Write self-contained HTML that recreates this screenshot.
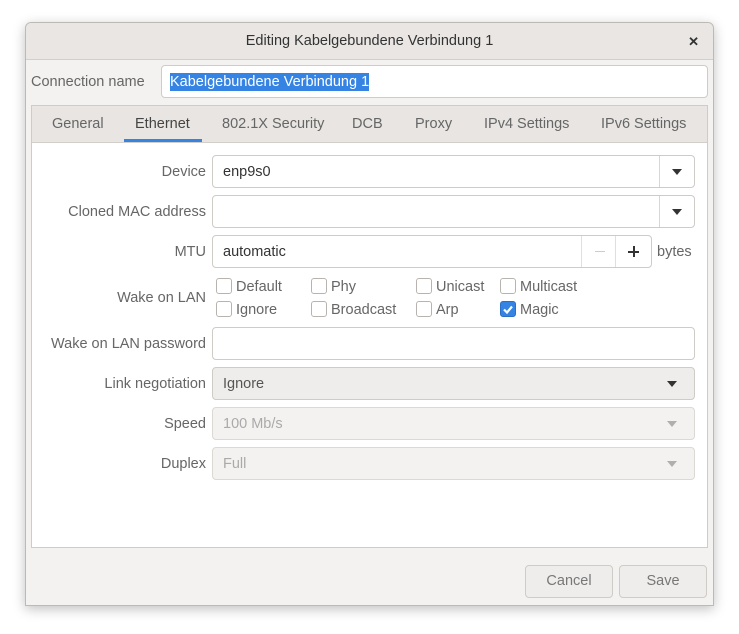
<!DOCTYPE html>
<html><head><style>
*{box-sizing:border-box;margin:0;padding:0}
body{width:739px;height:634px;background:#fff;font-family:"Liberation Sans",sans-serif;font-size:14.5px;color:#4a4a4a;position:relative;overflow:hidden}
.win{position:absolute;left:25px;top:22px;width:689px;height:584px;background:#f4f2f0;border:1px solid #bdb9b5;border-radius:6px 6px 0 0;box-shadow:0 3px 12px rgba(0,0,0,.25)}
.title{position:absolute;left:0;top:0;width:100%;height:37px;background:#e9e6e3;border-bottom:1px solid #d2cec9;border-radius:6px 6px 0 0;text-align:center;line-height:37px;color:#333;font-size:14.5px}
.x{position:absolute;right:14px;top:0;font-weight:bold;color:#333;font-size:13px}
.abs{position:absolute}
.entry{position:absolute;background:#fff;border:1px solid #cfcbc6;border-radius:4px;height:33px;line-height:33px;padding-left:10px;color:#333}
.lbl{position:absolute;text-align:right;color:#666;line-height:22px}
.nb{position:absolute;left:5px;top:82px;width:677px;height:443px;background:#fff;border:1px solid #cfcbc6}
.tabs{height:37px;background:#e8e5e2;border-bottom:1px solid #d2cec9;position:relative}
.tab{position:absolute;top:0;line-height:36px;color:#666}
.arrow{position:absolute;right:0;top:0;width:35px;height:31px;border-left:1px solid #d9d5d0}
.arrow:after{content:"";position:absolute;left:12px;top:13px;border-left:5px solid transparent;border-right:5px solid transparent;border-top:6px solid #333}
.cb{position:absolute;width:16px;height:16px;border:1px solid #b8b3ae;border-radius:3px;background:#fff}
.cbl{position:absolute;color:#666;line-height:18px}
.btn{position:absolute;top:542px;height:33px;border:1px solid #cfcbc6;border-radius:4px;background:#efedeb;text-align:center;line-height:31px;color:#777}
</style></head><body>
<div class="win">
<div class="title">Editing Kabelgebundene Verbindung 1<span class="x">✕</span></div>
<div class="lbl" style="left:5px;top:48px;color:#666">Connection name</div>
<div class="entry" style="left:135px;top:42px;width:547px;padding-left:8px"><span style="background:#3584e4;color:#fff;line-height:18px;display:inline-block">Kabelgebundene Verbindung 1</span></div>
<div class="nb">
<div class="tabs">
<span class="tab" style="left:20px">General</span>
<span class="tab" style="left:103px;color:#444">Ethernet</span>
<div class="abs" style="left:92px;top:33px;width:78px;height:3px;background:#3584e4"></div>
<span class="tab" style="left:190px">802.1X Security</span>
<span class="tab" style="left:320px">DCB</span>
<span class="tab" style="left:383px">Proxy</span>
<span class="tab" style="left:452px">IPv4 Settings</span>
<span class="tab" style="left:569px">IPv6 Settings</span>
</div>
</div>
<div class="lbl" style="right:507px;top:138px">Device</div>
<div class="entry" style="left:186px;top:132px;width:483px">enp9s0<div class="arrow"></div></div>
<div class="lbl" style="right:507px;top:178px">Cloned MAC address</div>
<div class="entry" style="left:186px;top:172px;width:483px"><div class="arrow"></div></div>
<div class="lbl" style="right:507px;top:218px">MTU</div>
<div class="entry" style="left:186px;top:212px;width:440px">automatic
<div class="abs" style="right:69px;top:0;width:1px;height:31px;background:#e2dfdb"></div>
<div class="abs" style="right:35px;top:0;width:1px;height:31px;background:#e2dfdb"></div>
<div class="abs" style="right:46px;top:15px;width:10px;height:1px;background:#ccc"></div>
<div class="abs" style="right:12px;top:15px;width:11px;height:2px;background:#333"></div>
<div class="abs" style="right:16.5px;top:10px;width:2px;height:11px;background:#333"></div>
</div>
<div class="lbl" style="left:631px;top:218px;color:#666">bytes</div>
<div class="lbl" style="right:507px;top:264px">Wake on LAN</div>
<div class="cb" style="left:190px;top:255px"></div><div class="cbl" style="left:210px;top:255px">Default</div>
<div class="cb" style="left:285px;top:255px"></div><div class="cbl" style="left:305px;top:255px">Phy</div>
<div class="cb" style="left:390px;top:255px"></div><div class="cbl" style="left:410px;top:255px">Unicast</div>
<div class="cb" style="left:474px;top:255px"></div><div class="cbl" style="left:494px;top:255px">Multicast</div>
<div class="cb" style="left:190px;top:278px"></div><div class="cbl" style="left:210px;top:278px">Ignore</div>
<div class="cb" style="left:285px;top:278px"></div><div class="cbl" style="left:305px;top:278px">Broadcast</div>
<div class="cb" style="left:390px;top:278px"></div><div class="cbl" style="left:410px;top:278px">Arp</div>
<div class="cb" style="left:474px;top:278px;background:#3584e4;border-color:#2a6fc4"><svg width="14" height="14" style="position:absolute;left:0;top:0"><path d="M3 7.5l3 3 5-6" stroke="#fff" stroke-width="2.2" fill="none"/></svg></div><div class="cbl" style="left:494px;top:278px">Magic</div>
<div class="lbl" style="right:507px;top:310px">Wake on LAN password</div>
<div class="entry" style="left:186px;top:304px;width:483px"></div>
<div class="lbl" style="right:507px;top:350px">Link negotiation</div>
<div class="entry" style="left:186px;top:344px;width:483px;background:#efedeb;color:#555">Ignore<div class="arrow" style="border:none;right:4px"></div></div>
<div class="lbl" style="right:507px;top:390px">Speed</div>
<div class="entry" style="left:186px;top:384px;width:483px;background:#f4f2f0;color:#aaa;border-color:#dcd8d4">100 Mb/s<div class="arrow" style="border:none;right:4px;opacity:.35"></div></div>
<div class="lbl" style="right:507px;top:430px">Duplex</div>
<div class="entry" style="left:186px;top:424px;width:483px;background:#f4f2f0;color:#aaa;border-color:#dcd8d4">Full<div class="arrow" style="border:none;right:4px;opacity:.35"></div></div>
<div class="btn" style="left:499px;width:88px">Cancel</div>
<div class="btn" style="left:593px;width:88px">Save</div>
</div>
</body></html>
